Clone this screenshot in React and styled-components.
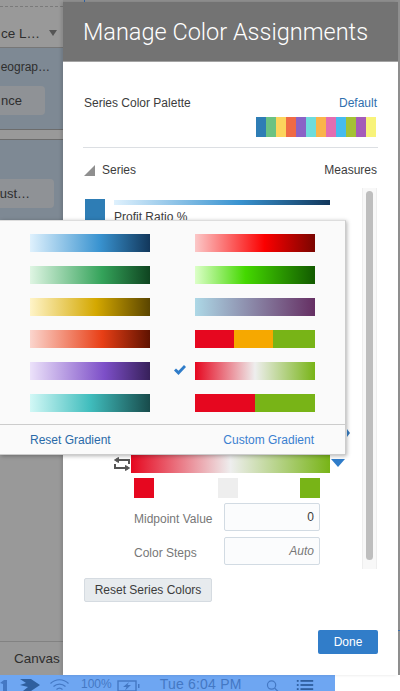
import React from "react";
import styled, { createGlobalStyle } from "styled-components";

const PALETTE = [
  "#2e7db5", "#6bc282", "#fcd45c", "#ef6a45", "#8a63c6", "#6edcdc",
  "#fab44a", "#e36db1", "#46bbee", "#a4c135", "#a45cb9", "#f8f37a",
];

const BLUE = "linear-gradient(90deg, #dff1fd, #3993d0 58%, #12375b)";
const DIVERGING = "linear-gradient(90deg, #e6071f, #eeeeee 50%, #78b417)";

const GRADIENTS = [
  { id: "blue", fill: BLUE },
  { id: "red", fill: "linear-gradient(90deg, #fbc8c8, #fb0000 58%, #7a0500)" },
  { id: "green", fill: "linear-gradient(90deg, #dff5e3, #34a35a 60%, #0f4420)" },
  { id: "lime", fill: "linear-gradient(90deg, #dcffc8, #44d800 42%, #125a00)" },
  { id: "gold", fill: "linear-gradient(90deg, #fff4c8, #d4a800 55%, #5a4500)" },
  { id: "plum", fill: "linear-gradient(90deg, #add8e6, #652f63)" },
  { id: "orange", fill: "linear-gradient(90deg, #fbd5cd, #e83f16 60%, #5f1200)" },
  { id: "traffic", fill: "linear-gradient(90deg, #e6071f 32.5%, #f6a800 32.5%, #f6a800 65%, #78b417 65%)" },
  { id: "purple", fill: "linear-gradient(90deg, #ece2fa, #7d4fc8 62%, #37205a)" },
  { id: "diverging", fill: DIVERGING, selected: true },
  { id: "teal", fill: "linear-gradient(90deg, #d2f8f6, #40bdbd 50%, #184b4b)" },
  { id: "split", fill: "linear-gradient(90deg, #e6071f 50%, #78b417 50%)" },
];

const GlobalStyle = createGlobalStyle`
  html, body {
    margin: 0;
    padding: 0;
    overflow: hidden;
    background: #fff;
  }
  * {
    box-sizing: border-box;
  }
`;

const Page = styled.div`
  position: relative;
  width: 400px;
  height: 691px;
  overflow: hidden;
  background: #fff;
  color: #3c3c3c;
  font-family: "Liberation Sans", Arial, sans-serif;
  font-size: 12px;
`;

const Stage = styled.div`
  display: flex;
  height: 675px;
  background: #8f8f8f;
`;

const SidePanel = styled.div`
  width: 63px;
  flex: none;
  display: flex;
  flex-direction: column;
  background: #999;
  color: #2e2e2e;
  overflow: hidden;
`;

const SideTop = styled.div`
  height: 48px;
  flex: none;
  padding: 6px 0 0;
  border-bottom: 1px solid #777;

  &::before {
    content: "";
    display: block;
    border-top: 1px dashed #7a7a7a;
  }
`;

const SideSelect = styled.div`
  display: flex;
  justify-content: flex-end;
  align-items: center;
  gap: 9px;
  height: 20px;
  margin-top: 16px;
  padding-right: 6px;
  white-space: nowrap;
  font-size: 13.5px;
`;

const SideCaret = styled.span`
  flex: none;
  width: 0;
  height: 0;
  border-left: 4.5px solid transparent;
  border-right: 4.5px solid transparent;
  border-top: 6px solid #555;
`;

const SideBlue = styled.div`
  flex: none;
  height: ${(props) => props.$height}px;
  background: #7e8994;
  display: flex;
  flex-direction: column;
  align-items: flex-end;
`;

const SideLabel = styled.div`
  height: 16px;
  margin-top: 11px;
  padding-right: 13px;
  line-height: 16px;
  white-space: nowrap;
  font-size: 12px;
`;

const SideButton = styled.div`
  align-self: flex-start;
  width: ${(props) => props.$width}px;
  height: 29px;
  margin-top: ${(props) => props.$top}px;
  display: flex;
  align-items: center;
  justify-content: flex-end;
  padding-right: ${(props) => props.$pad}px;
  background: #8f9296;
  border-radius: 0 4px 4px 0;
  white-space: nowrap;
  font-size: 13px;
`;

const SideBand = styled.div`
  flex: none;
  height: 11px;
  background: #999;
  border-top: 1px solid #6c6c6c;
  border-bottom: 1px solid #6c6c6c;
`;

const SideRest = styled.div`
  flex: 1;
  display: flex;
  flex-direction: column;
  justify-content: flex-end;
`;

const SideFooter = styled.div`
  height: 34px;
  padding: 9px 0 0 14px;
  border-top: 1px solid #828282;
  font-size: 13.5px;
  white-space: nowrap;
`;

const Dialog = styled.div`
  width: 335px;
  flex: none;
  margin-top: 2px;
  background: #fff;
  display: flex;
  flex-direction: column;
  box-shadow: -2px 0 3px rgba(0, 0, 0, 0.12);
`;

const DialogHeader = styled.div`
  height: 60px;
  flex: none;
  padding: 0 0 0 20px;
  display: flex;
  align-items: center;
  background: #737373;
  border-bottom: 1px solid #a3a3a3;
  color: #fff;
  font-family: Roboto, "Liberation Sans", sans-serif;
  font-weight: 300;
  font-size: 23.5px;
  white-space: nowrap;
`;

const DialogBody = styled.div`
  flex: 1;
  display: flex;
  flex-direction: column;
  padding: 34px 21px 20px 21px;
`;

const PaletteRow = styled.div`
  display: flex;
  justify-content: space-between;
  align-items: center;
  height: 14px;
`;

const LinkText = styled.span`
  color: #2f6fae;
`;

const Palette = styled.div`
  display: flex;
  justify-content: flex-end;
  padding-right: 1px;
  margin-top: 7px;
`;

const PaletteChip = styled.span`
  width: 10px;
  height: 20px;
  background: ${(props) => props.$color};
`;

const Divider = styled.div`
  height: 1px;
  margin: 10px -1px 0;
  background: #dcdfe3;
`;

const SeriesHeader = styled.div`
  display: flex;
  justify-content: space-between;
  align-items: center;
  height: 14px;
  margin-top: 15px;
`;

const SeriesTitle = styled.div`
  display: flex;
  align-items: center;
  gap: 7px;
`;

const Triangle = styled.span`
  width: 0;
  height: 0;
  border-left: 11px solid transparent;
  border-bottom: 11px solid #8f8f8f;
`;

const SeriesArea = styled.div`
  display: flex;
  margin-top: 11px;
  height: 381px;
`;

const SeriesList = styled.div`
  flex: 1;
  padding-top: 11px;
  min-width: 0;
`;

const SeriesItem = styled.div`
  display: flex;
  gap: 9px;
  padding-left: 1px;
  height: 256px;
`;

const SeriesChip = styled.span`
  width: 20px;
  height: 30px;
  flex: none;
  background: #2e7db5;
`;

const SeriesInfo = styled.div`
  width: 216px;
  padding-top: 1px;
`;

const SeriesBar = styled.div`
  height: 5px;
  background: ${BLUE};
`;

const SeriesName = styled.div`
  margin-top: 5px;
  color: #3c3c3c;
`;

const GradientRow = styled.div`
  display: flex;
  align-items: flex-start;
  padding-left: 29px;
`;

const SwapIcon = styled.svg`
  width: 18px;
  height: 14px;
  margin-top: 2px;
  flex: none;
`;

const GradientBar = styled.div`
  width: 199px;
  height: 18px;
  flex: none;
  background: ${DIVERGING};
`;

const DropCaret = styled.span`
  flex: none;
  margin: 4px 0 0 1px;
  width: 0;
  height: 0;
  border-left: 7px solid transparent;
  border-right: 7px solid transparent;
  border-top: 8px solid #2f7cc9;
`;

const Stops = styled.div`
  display: flex;
  justify-content: space-between;
  width: 186px;
  margin: 5px 0 0 50px;
`;

const Stop = styled.span`
  width: 20px;
  height: 20px;
  background: ${(props) => props.$color};

  &:nth-child(2) {
    margin-left: 1px;
  }
`;

const Fields = styled.div`
  display: grid;
  grid-template-columns: 90px 96px;
  row-gap: 6px;
  margin: 5px 0 0 50px;
  align-items: center;
  color: #777;
`;

const FieldLabel = styled.span`
  padding-top: 3px;
`;

const Field = styled.div`
  height: 28px;
  padding: 0 5px 1px 0;
  display: flex;
  align-items: center;
  justify-content: flex-end;
  background: #fbfcfd;
  border: 1px solid #d2dbe3;
  border-radius: 2px;
  color: ${(props) => (props.$auto ? "#777" : "#3c3c3c")};
  font-style: ${(props) => (props.$auto ? "italic" : "normal")};
`;

const ScrollTrack = styled.div`
  width: 15px;
  flex: none;
  padding: 3px 3px 9px 3px;
  background: #f8f8f8;
  border-left: 1px solid #eee;
  border-right: 1px solid #eee;
`;

const ScrollThumb = styled.div`
  height: 100%;
  border-radius: 4px;
  background: #bebebe;
`;

const ResetButton = styled.button`
  align-self: flex-start;
  width: 128px;
  height: 24px;
  margin-top: 9px;
  padding: 0;
  background: #e7ebee;
  border: 1px solid #d5dbe1;
  border-radius: 2px;
  color: #3c3c3c;
  font: inherit;
`;

const DoneRow = styled.div`
  display: flex;
  justify-content: flex-end;
  margin-top: 28px;
  margin-right: -1px;
`;

const DoneButton = styled.button`
  width: 60px;
  height: 24px;
  padding: 0;
  background: #317dc9;
  border: none;
  border-radius: 2px;
  color: #fff;
  font: inherit;
`;

const RightStrip = styled.div`
  flex: 1;
  position: relative;

  &::after {
    content: "";
    position: absolute;
    left: 0;
    right: 0;
    top: 630px;
    height: 1px;
    background: #3a6fb0;
  }
`;

const MenuBar = styled.div`
  width: 335px;
  height: 16px;
  display: flex;
  align-items: flex-start;
  overflow: hidden;
  background: #6ea6f2;
  color: #4478c4;
`;

const MenuIcon = styled.svg`
  flex: none;
  margin-left: ${(props) => props.$left}px;
  margin-top: ${(props) => props.$top || 0}px;
  overflow: visible;
`;

const MenuText = styled.span`
  flex: none;
  height: 11px;
  margin-left: ${(props) => props.$left}px;
  margin-top: 4px;
  font-size: ${(props) => props.$size}px;
  letter-spacing: ${(props) => props.$spacing || 0}px;
  line-height: 11px;
  white-space: nowrap;
`;

const Popup = styled.div`
  position: absolute;
  left: 0;
  top: 220px;
  width: 346px;
  height: 235px;
  display: flex;
  flex-direction: column;
  background: #fafafa;
  border-right: 1px solid #ccc;
  border-bottom: 1px solid #ccc;
  border-top: 1px solid #ddd;
  box-shadow: 1px 1px 4px rgba(0, 0, 0, 0.3);
`;

const SwatchGrid = styled.div`
  display: grid;
  grid-template-columns: 120px 120px;
  grid-auto-rows: 18px;
  column-gap: 45px;
  row-gap: 14px;
  padding: 13px 0 0 30px;
`;

const Swatch = styled.div`
  position: relative;
  background: ${(props) => props.$fill};
`;

const CheckMark = styled.svg`
  position: absolute;
  left: -21px;
  top: 3px;
  width: 12px;
  height: 10px;
`;

const PopupFooter = styled.div`
  margin-top: 12px;
  height: 31px;
  display: flex;
  justify-content: space-between;
  align-items: center;
  padding: 0 31px 0 30px;
  border-top: 1px solid #ccc;
`;

const PopupLink = styled.span`
  color: ${(props) => props.$color};
`;

const PeekArrow = styled.span`
  position: absolute;
  left: 347px;
  top: 429px;
  width: 0;
  height: 0;
  border-top: 4px solid transparent;
  border-bottom: 4px solid transparent;
  border-left: 3px solid #2f6fae;
`;

const TopTick = styled.span`
  position: absolute;
  left: 84px;
  top: 0;
  width: 1px;
  height: 2px;
  background: #2f5f9f;
`;

const App = () => {
  return (
    <Page>
      <GlobalStyle />
      <Stage>
        <SidePanel>
          <SideTop>
            <SideSelect>
              ce L…
              <SideCaret />
            </SideSelect>
          </SideTop>
          <SideBlue $height={81}>
            <SideLabel>eograp…</SideLabel>
            <SideButton $width={45} $top={11} $pad={23}>nce</SideButton>
          </SideBlue>
          <SideBand />
          <SideBlue $height={80}>
            <SideButton $width={54} $top={39} $pad={24}>ust…</SideButton>
          </SideBlue>
          <SideRest>
            <SideFooter>Canvas</SideFooter>
          </SideRest>
        </SidePanel>
        <Dialog>
          <DialogHeader>Manage Color Assignments</DialogHeader>
          <DialogBody>
            <PaletteRow>
              <span>Series Color Palette</span>
              <LinkText>Default</LinkText>
            </PaletteRow>
            <Palette>
              {PALETTE.map((color) => (
                <PaletteChip key={color} $color={color} />
              ))}
            </Palette>
            <Divider />
            <SeriesHeader>
              <SeriesTitle>
                <Triangle />
                Series
              </SeriesTitle>
              <span>Measures</span>
            </SeriesHeader>
            <SeriesArea>
              <SeriesList>
                <SeriesItem>
                  <SeriesChip />
                  <SeriesInfo>
                    <SeriesBar />
                    <SeriesName>Profit Ratio %</SeriesName>
                  </SeriesInfo>
                </SeriesItem>
                <GradientRow>
                  <SwapIcon viewBox="0 0 18 14" fill="none" stroke="#555" strokeWidth="2">
                    <path d="M16 7V3H4" />
                    <path d="M5.500 .5L1.500 3l4 2.500z" fill="#555" strokeWidth="1" />
                    <path d="M2 7v4h12" />
                    <path d="M12.500 8.500l4 2.500-4 2.500z" fill="#555" strokeWidth="1" />
                  </SwapIcon>
                  <GradientBar />
                  <DropCaret />
                </GradientRow>
                <Stops>
                  <Stop $color="#e6071f" />
                  <Stop $color="#eeeeee" />
                  <Stop $color="#78b417" />
                </Stops>
                <Fields>
                  <FieldLabel>Midpoint Value</FieldLabel>
                  <Field>0</Field>
                  <FieldLabel>Color Steps</FieldLabel>
                  <Field $auto>Auto</Field>
                </Fields>
              </SeriesList>
              <ScrollTrack>
                <ScrollThumb />
              </ScrollTrack>
            </SeriesArea>
            <ResetButton>Reset Series Colors</ResetButton>
            <DoneRow>
              <DoneButton>Done</DoneButton>
            </DoneRow>
          </DialogBody>
        </Dialog>
        <RightStrip />
      </Stage>
      <MenuBar>
        <MenuIcon $left={0} $top={5} width="7" height="11" viewBox="0 0 7 11">
          <path d="M0 3l4-3h3v11H3V4z" fill="#4478c4" />
        </MenuIcon>
        <MenuIcon $left={13} $top={4} width="20" height="12" viewBox="0 0 20 12">
          <path d="M0 0h11l9 6-9 6H3l5-4L0 6l6-2z" fill="#2f5f9f" />
        </MenuIcon>
        <MenuIcon $left={9} $top={3} width="21" height="13" viewBox="0 0 20 13" fill="none" stroke="#4478c4" strokeWidth="1.2">
          <path d="M1 5.5c5-5 13-5 18 0" />
          <path d="M4 8.5c3.500-3.300 8.500-3.300 12 0" />
          <path d="M7 11.500c2-1.800 4-1.800 6 0" />
        </MenuIcon>
        <MenuText $left={11} $size={12}>100%</MenuText>
        <MenuIcon $left={5} $top={5} width="23" height="11" viewBox="0 0 23 11">
          <rect x="1" y="1" width="18" height="10" fill="none" stroke="#4478c4" strokeWidth="1.4" />
          <path d="M12 2L6 7h3.500L8 10.500 14 5h-3.500z" fill="#4478c4" />
          <rect x="21" y="4" width="1.500" height="4" fill="#4478c4" />
        </MenuIcon>
        <MenuText $left={20} $size={14} $spacing={0.2}>Tue 6:04 PM</MenuText>
        <MenuIcon $left={24} $top={5} width="13" height="11" viewBox="0 0 13 12" fill="none" stroke="#4478c4" strokeWidth="1.3">
          <circle cx="5.500" cy="5.500" r="4.500" />
          <path d="M9 9l3.500 3.500" />
        </MenuIcon>
        <MenuIcon $left={17} $top={5} width="18" height="10" viewBox="0 0 18 11" fill="#2f5f9f">
          <rect x="0" y="0" width="2" height="2" />
          <rect x="4" y="0" width="14" height="2" />
          <rect x="0" y="4.500" width="2" height="2" />
          <rect x="4" y="4.500" width="14" height="2" />
          <rect x="0" y="9" width="2" height="2" />
          <rect x="4" y="9" width="14" height="2" />
        </MenuIcon>
      </MenuBar>
      <Popup>
        <SwatchGrid>
          {GRADIENTS.map((item) => (
            <Swatch key={item.id} $fill={item.fill}>
              {item.selected && (
                <CheckMark viewBox="0 0 12 10">
                  <path d="M0 5.500l2-2 2.500 2.300L10 0l2 2-7.500 8z" fill="#2f7cc9" />
                </CheckMark>
              )}
            </Swatch>
          ))}
        </SwatchGrid>
        <PopupFooter>
          <PopupLink $color="#2a6aa8">Reset Gradient</PopupLink>
          <PopupLink $color="#3a80d0">Custom Gradient</PopupLink>
        </PopupFooter>
      </Popup>
      <PeekArrow />
      <TopTick />
    </Page>
  );
};

export default App;
